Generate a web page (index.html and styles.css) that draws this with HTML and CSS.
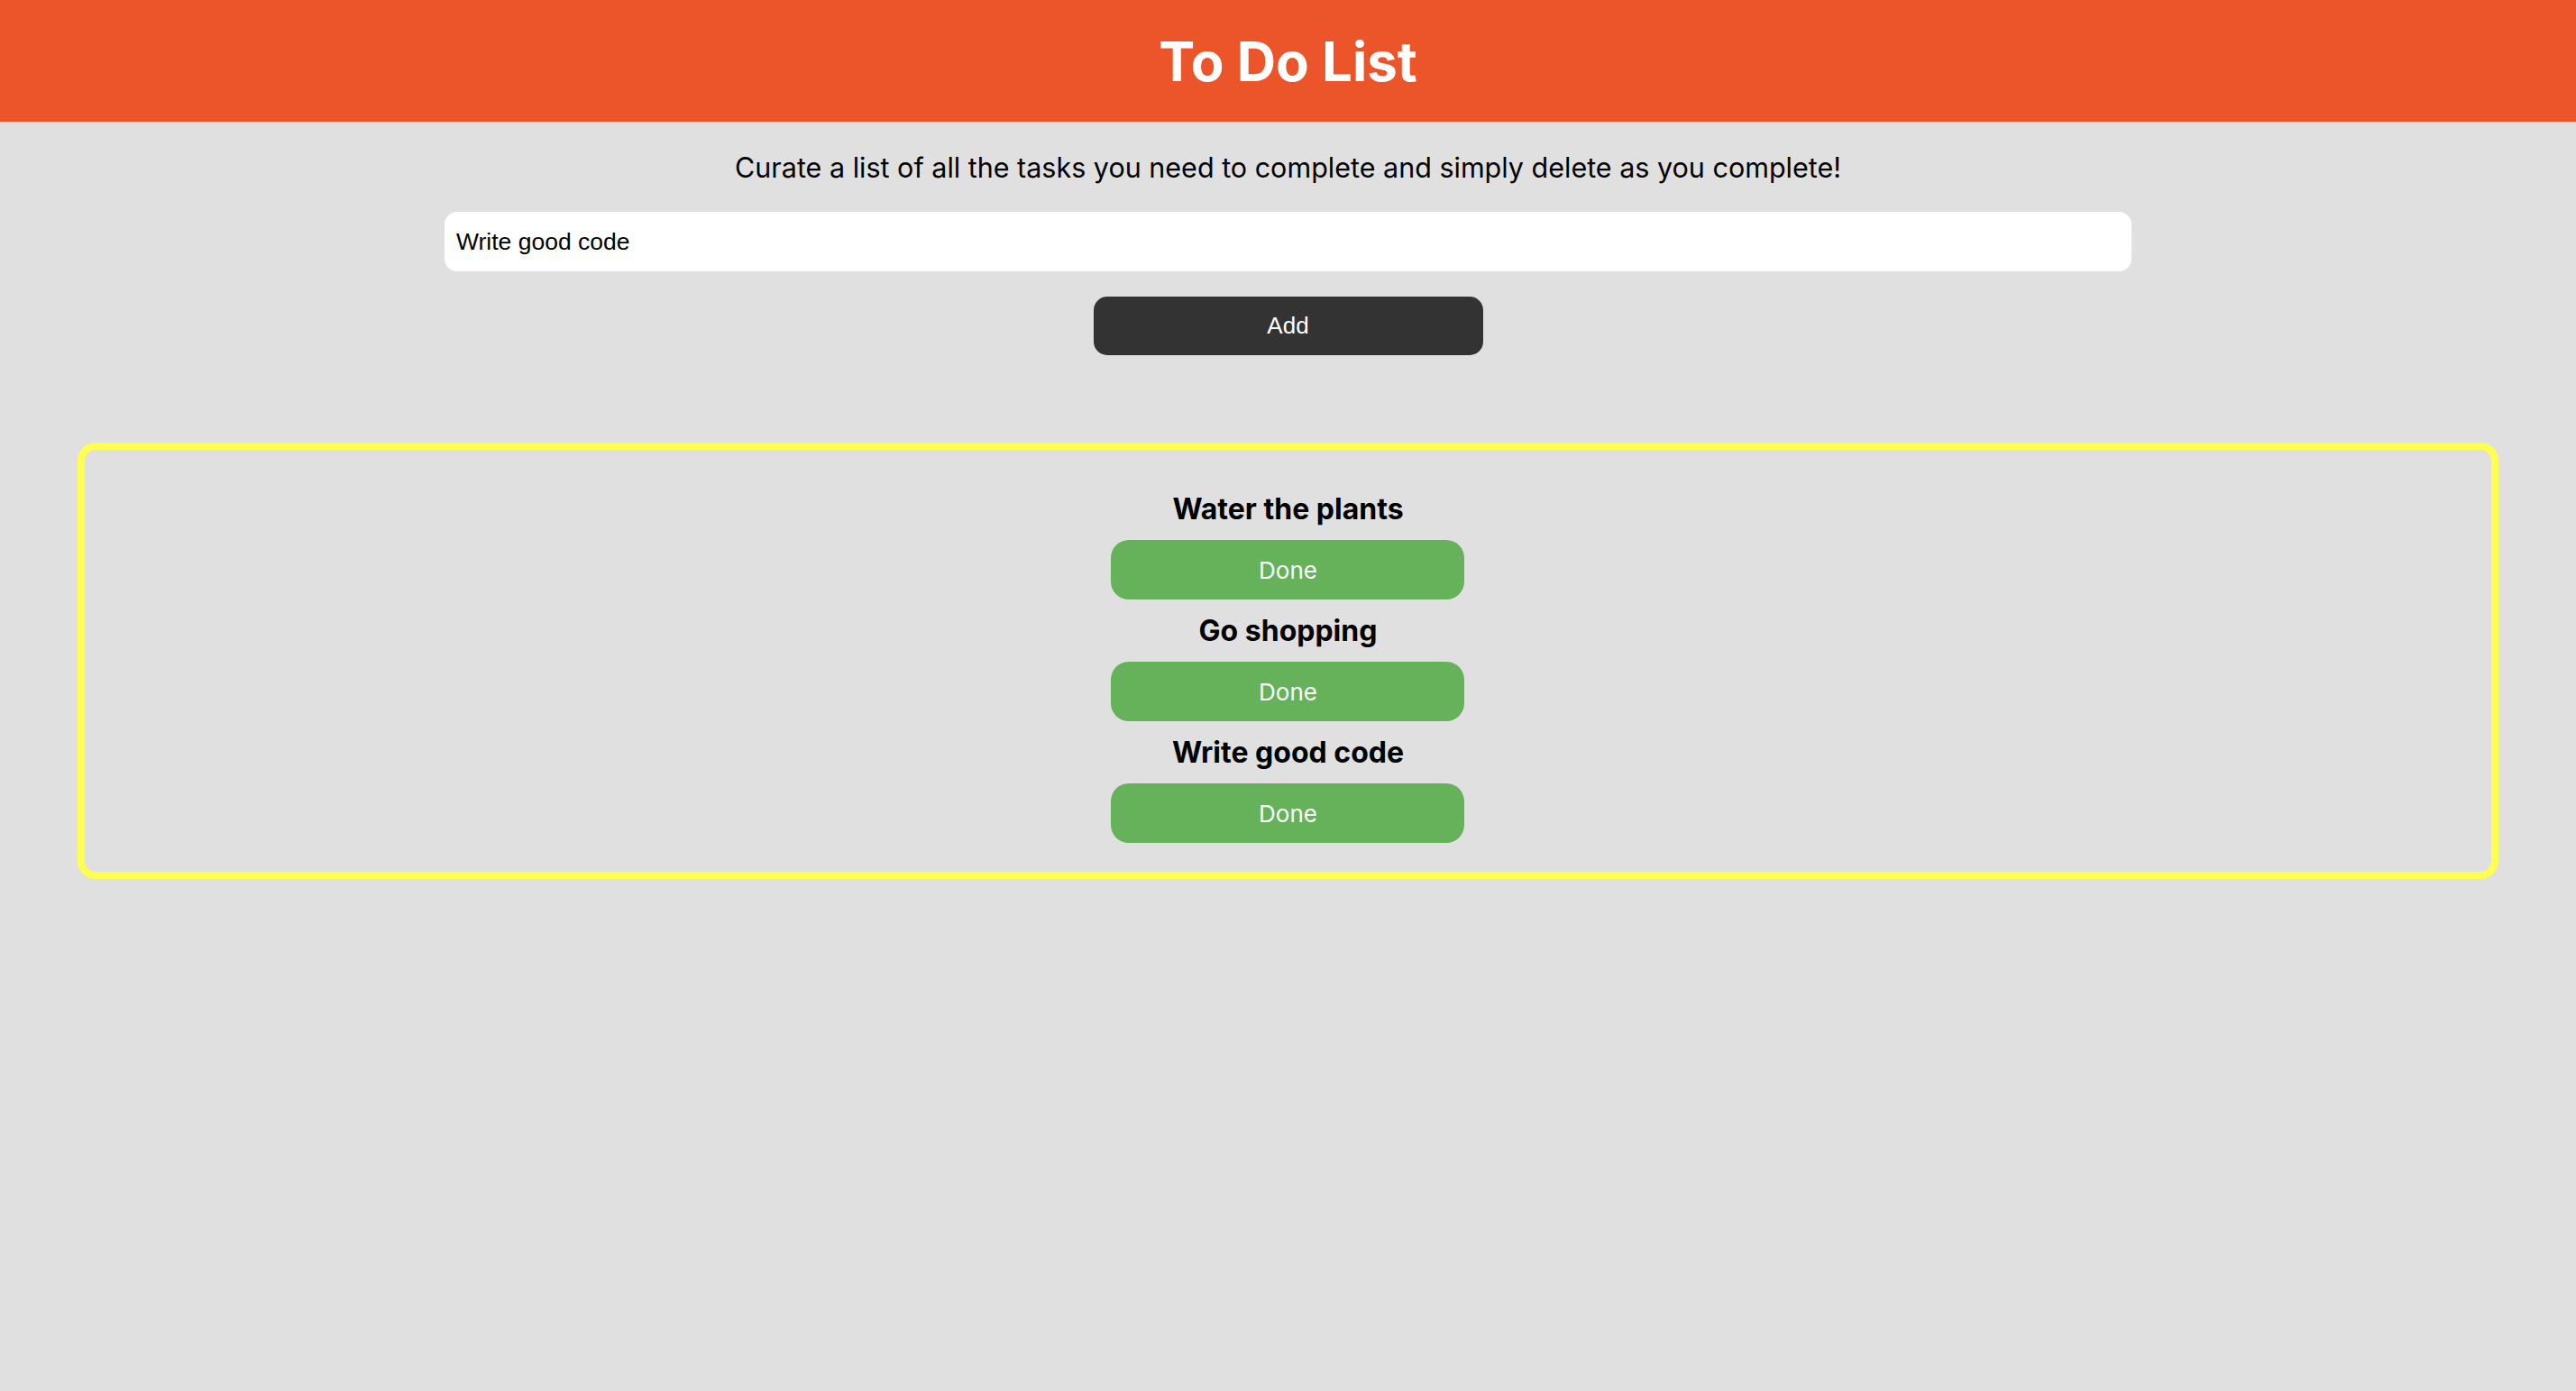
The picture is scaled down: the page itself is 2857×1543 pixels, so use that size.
FILE: index.html
```html
<!DOCTYPE html>
<html lang="en">
<head>
<meta charset="utf-8">
<title>To Do List</title>
<link rel="stylesheet" href="styles.css">
</head>
<body>
<header class="topbar"><h1 class="title">To Do List</h1></header>
<main class="main">
  <p class="desc">Curate a list of all the tasks you need to complete and simply delete as you complete!</p>
  <input class="task-input" type="text" value="Write good code">
  <button class="add-btn">Add</button>
  <section class="list">
    <div class="item">
      <h3 class="item-title">Water the plants</h3>
      <button class="done-btn">Done</button>
    </div>
    <div class="item">
      <h3 class="item-title">Go shopping</h3>
      <button class="done-btn">Done</button>
    </div>
    <div class="item">
      <h3 class="item-title">Write good code</h3>
      <button class="done-btn">Done</button>
    </div>
  </section>
</main>
</body>
</html>
```
FILE: styles.css
```css
* { box-sizing: border-box; }
html, body { margin: 0; padding: 0; }
body {
  background: #e0e0e0;
  font-family: Inter, "Noto Sans", sans-serif;
  color: #000;
  min-height: 100vh;
}
.topbar {
  background: #ec5429;
  height: 135px;
  display: flex;
  align-items: center;
  justify-content: center;
}
.title {
  margin: 0;
  color: #fff;
  font-family: Inter, sans-serif;
  font-weight: 700;
  font-size: 60px;
  line-height: 1;
}
.main {
  display: flex;
  flex-direction: column;
  align-items: center;
}
.desc {
  margin: 34px 0 0;
  font-size: 30.5px;
  line-height: 34px;
  font-weight: 400;
}
.task-input {
  margin-top: 32px;
  width: 1871px;
  height: 66px;
  border: none;
  border-radius: 14px;
  background: #fff;
  padding: 0 13px;
  font-family: "Liberation Sans", Arial, sans-serif;
  font-size: 26.5px;
  color: #000;
  outline: none;
}
.add-btn {
  margin-top: 28px;
  width: 432px;
  height: 65px;
  border: none;
  border-radius: 15px;
  background: #333333;
  color: #fff;
  font-family: "Liberation Sans", Arial, sans-serif;
  font-size: 26px;
}
.list {
  margin-top: 97px;
  width: 94%;
  border: 8px solid #ffff50;
  border-radius: 20px;
  padding: 47px 0 16px;
  display: flex;
  flex-direction: column;
  align-items: center;
}
.item {
  display: flex;
  flex-direction: column;
  align-items: center;
  margin-bottom: 16px;
}
.item-title {
  margin: 0;
  font-size: 32px;
  line-height: 38px;
  font-weight: 700;
}
.done-btn {
  margin-top: 15px;
  width: 392px;
  height: 66px;
  border: none;
  border-radius: 20px;
  background: #65b25a;
  color: #fff;
  font-family: Inter, sans-serif;
  font-size: 26px;
}
```
